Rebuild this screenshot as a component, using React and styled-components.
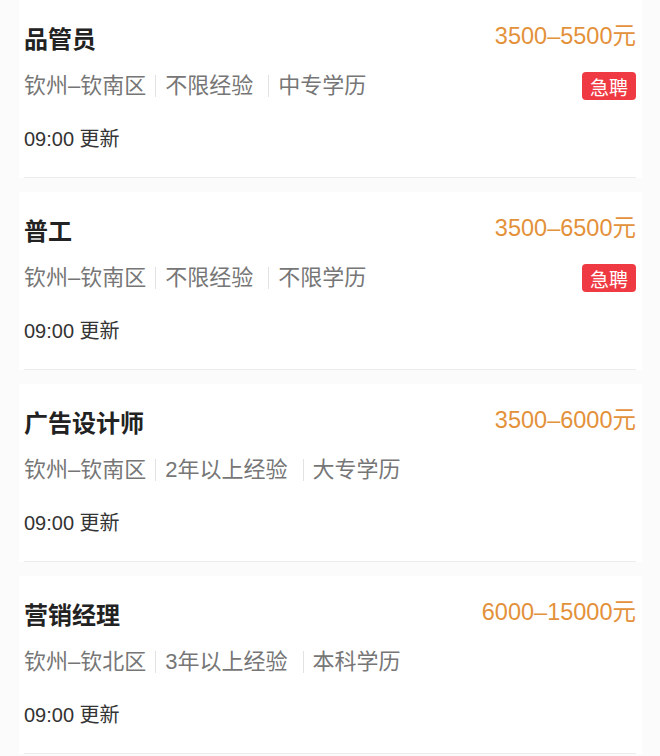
import React from "react";
import styled, { createGlobalStyle } from "styled-components";

const Global = createGlobalStyle`
  html, body { margin: 0; padding: 0; background: #fbfbfb; }
  body { font-family: "Liberation Sans", "Noto Sans CJK SC", sans-serif; }
`;

const List = styled.div`
  display: flex;
  flex-direction: column;
  gap: 14px;
  padding: 0 18px 0 19px;
`;

const Card = styled.div`
  background: #fff;
  padding: 0 6px 0 5px;
`;

const Inner = styled.div`
  padding: 22px 0 25px;
  border-bottom: 1px solid #ececec;
  display: flex;
  flex-direction: column;
`;

const Header = styled.div`
  display: flex;
  justify-content: space-between;
  align-items: flex-start;
  height: 34px;
`;

const Title = styled.div`
  margin-top: 2px;
  font-size: 24px;
  line-height: 32px;
  font-weight: 700;
  color: #222;
`;

const Salary = styled.div`
  font-size: 23.5px;
  line-height: 28px;
  color: #e3913a;
`;

const InfoRow = styled.div`
  margin-top: 16px;
  height: 28px;
  display: flex;
  align-items: center;
`;

const Tag = styled.span`
  font-size: 22px;
  line-height: 28px;
  color: #767676;
`;

const Divider = styled.span`
  width: 1px;
  height: 22px;
  background: #e2e2e2;
  margin: 0 9px 0 ${(p) => p.$left}px;
`;

const Badge = styled.span`
  margin-left: auto;
  height: 28px;
  width: 54px;
  border-radius: 4px;
  background: #ef3a43;
  color: #fff;
  font-size: 19px;
  display: flex;
  align-items: center;
  justify-content: center;
`;

const Updated = styled.div`
  margin-top: 26px;
  font-size: 20px;
  line-height: 26px;
  color: #333;
`;

const jobs = [
  { title: "品管员", salary: "3500–5500元", tags: ["钦州–钦南区", "不限经验", "中专学历"], urgent: true },
  { title: "普工", salary: "3500–6500元", tags: ["钦州–钦南区", "不限经验", "不限学历"], urgent: true },
  { title: "广告设计师", salary: "3500–6000元", tags: ["钦州–钦南区", "2年以上经验", "大专学历"], urgent: false },
  { title: "营销经理", salary: "6000–15000元", tags: ["钦州–钦北区", "3年以上经验", "本科学历"], urgent: false },
];

export default function App() {
  return (
    <>
      <Global />
      <List>
        {jobs.map((j) => (
          <Card key={j.title}>
            <Inner>
              <Header>
                <Title>{j.title}</Title>
                <Salary>{j.salary}</Salary>
              </Header>
              <InfoRow>
                {j.tags.map((t, i) => (
                  <React.Fragment key={t}>
                    {i > 0 && <Divider $left={i === 2 ? 15 : 9} />}
                    <Tag>{t}</Tag>
                  </React.Fragment>
                ))}
                {j.urgent && <Badge>急聘</Badge>}
              </InfoRow>
              <Updated>09:00 更新</Updated>
            </Inner>
          </Card>
        ))}
      </List>
    </>
  );
}
